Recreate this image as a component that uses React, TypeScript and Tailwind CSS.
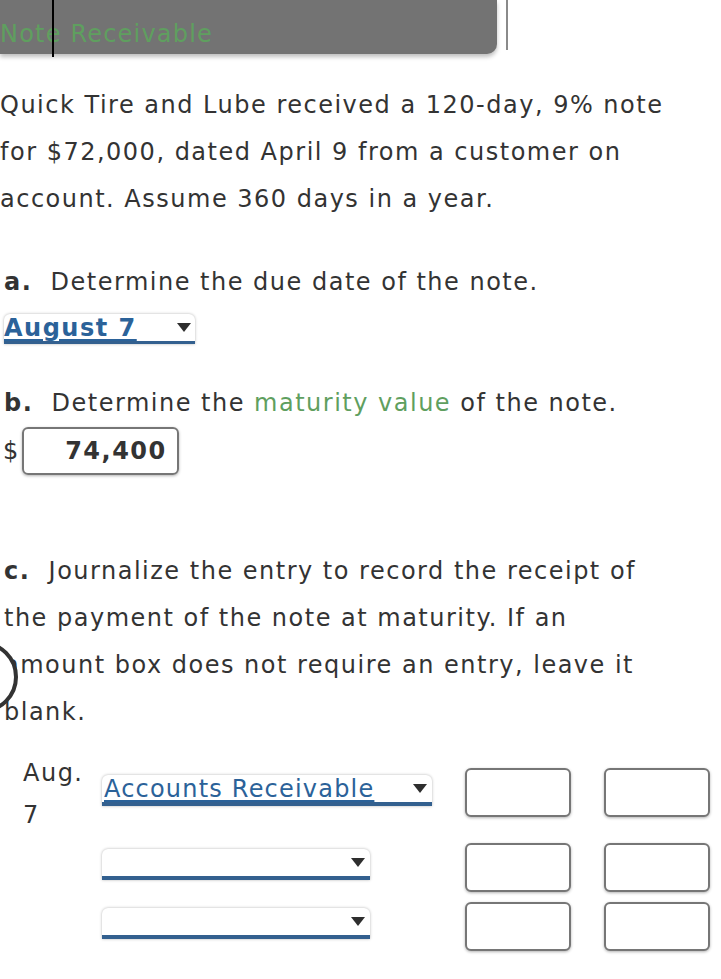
const font = { fontFamily: '"DejaVu Sans", Verdana, sans-serif' }

function Caret() {
  return (
    <svg width="14" height="9" viewBox="0 0 14 9" className="shrink-0">
      <path d="M0 0 L14 0 L7 9 Z" fill="#2e2e2e" />
    </svg>
  )
}

function Box({ className = '' }: { className?: string }) {
  return (
    <div
      className={`h-[49px] w-[106px] rounded-[6px] border-2 border-[#767676] bg-white shadow-[0_1px_3px_rgba(0,0,0,0.3)] ${className}`}
    />
  )
}

function Select({ width, label }: { width: string; label?: string }) {
  return (
    <div
      className={`${width} flex h-[31px] items-center justify-between rounded-t-[6px] border-b-[4px] border-[#33608f] bg-white pr-[5px] shadow-[0_0_3px_rgba(0,0,0,0.3)]`}
    >
      <span className="pl-[2px] text-[24px] leading-none tracking-[1.2px] text-[#2b6299] underline underline-offset-[3px]">
        {label}
      </span>
      <Caret />
    </div>
  )
}

export default function App() {
  return (
    <div className="relative h-[979px] w-[721px] overflow-hidden bg-white tracking-[1.5px] text-[#333]" style={font}>
      {/* header */}
      <div className="relative h-[54px] w-[497px] rounded-br-[10px] bg-[#737373] shadow-[0_3px_4px_rgba(0,0,0,0.25)]">
        <span className="absolute bottom-[8px] left-0 text-[24px] leading-none tracking-[1.2px] text-[#5f9f5f]">Note Receivable</span>
      </div>
      <div className="absolute left-[52px] top-0 h-[57px] w-[2px] bg-black" />
      <div className="absolute left-[506px] top-0 h-[50px] w-[2px] bg-[#8a8a8a]" />

      <p className="mt-[28px] text-[24px] leading-[47px]">
        Quick Tire and Lube received a 120-day, 9% note
        <br />
        for $72,000, dated April 9 from a customer on
        <br />
        account. Assume 360 days in a year.
      </p>

      <p className="mt-[36px] pl-[4px] text-[24px] leading-[47px]">
        <b>a.</b>&nbsp; Determine the due date of the note.
      </p>
      <div className="ml-[4px] mt-[8px] flex h-[30px] w-[191px] items-center justify-between rounded-t-[6px] border-b-[3px] border-[#33608f] bg-white pr-[4px] shadow-[0_0_3px_rgba(0,0,0,0.3)]">
        <span className="text-[24px] font-bold leading-none text-[#2b6299] underline underline-offset-[3px]">August 7</span>
        <Caret />
      </div>

      <p className="mt-[36px] pl-[4px] text-[24px] leading-[47px]">
        <b>b.</b>&nbsp; Determine the <span className="text-[#5f9f5f]">maturity value</span> of the note.
      </p>
      <div className="flex items-center pl-[3px]">
        <span className="text-[24px]">$</span>
        <div className="ml-[2px] flex h-[48px] w-[157px] items-center justify-end rounded-[6px] border-2 border-[#767676] pr-[10px] text-[24px] font-bold shadow-[0_1px_3px_rgba(0,0,0,0.3)]">
          74,400
        </div>
      </div>

      <p className="mt-[73px] pl-[4px] text-[24px] leading-[47px]">
        <b>c.</b>&nbsp; Journalize the entry to record the receipt of
        <br />
        the payment of the note at maturity. If an
        <br />
        amount box does not require an entry, leave it
        <br />
        blank.
      </p>
      <svg className="absolute left-0 top-[640px]" width="20" height="76" viewBox="0 0 20 76">
        <circle cx="-18" cy="37" r="34" fill="white" stroke="#333" strokeWidth="4" />
      </svg>

      {/* journal */}
      <div className="mt-[16px] flex items-start">
        <div className="ml-[23px] w-[79px] text-[24px] leading-[42px]">
          Aug.
          <br />
          7
        </div>
        <div className="mt-[23px]">
          <Select width="w-[330px]" label="Accounts Receivable" />
        </div>
        <Box className="ml-[33px] mt-[16px]" />
        <Box className="ml-[33px] mt-[16px]" />
      </div>
      <div className="mt-[7px] flex items-start">
        <div className="ml-[102px] mt-[6px]">
          <Select width="w-[268px]" />
        </div>
        <Box className="ml-[95px]" />
        <Box className="ml-[33px]" />
      </div>
      <div className="mt-[10px] flex items-start">
        <div className="ml-[102px] mt-[6px]">
          <Select width="w-[268px]" />
        </div>
        <Box className="ml-[95px]" />
        <Box className="ml-[33px]" />
      </div>
    </div>
  )
}
